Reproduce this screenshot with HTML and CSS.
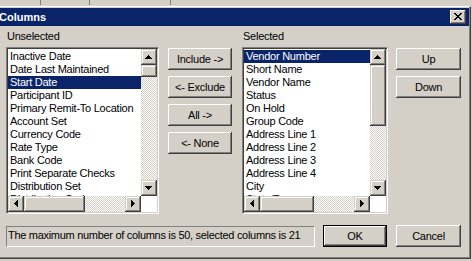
FILE: index.html
```html
<!DOCTYPE html>
<html>
<head>
<meta charset="utf-8">
<link rel="stylesheet" href="styles.css">
</head>
<body>
<div class="backdrop"></div>
<div class="dialog">
  <div class="caption">
    <span class="caption-title">Columns</span>
    <div class="caption-close">
      <svg width="16" height="14" viewBox="0 0 16 14" shape-rendering="crispEdges"><path transform="translate(4 3)" d="M0 0h2v1H0z M6 0h2v1H6z M1 1h2v1H1z M5 1h2v1H5z M2 2h4v1H2z M3 3h2v1H3z M2 4h4v1H2z M1 5h2v1H1z M5 5h2v1H5z M0 6h2v1H0z M6 6h2v1H6z" fill="#000"/></svg>
    </div>
  </div>
  <div class="dialog-body">
    <div class="lists">
      <div class="label">Unselected</div>
      <div></div>
      <div class="label">Selected</div>
      <div></div>

      <div class="listbox listbox-left">
        <div class="items">
          <div class="item">Inactive Date</div>
          <div class="item">Date Last Maintained</div>
          <div class="item selected">Start Date</div>
          <div class="item">Participant ID</div>
          <div class="item">Primary Remit-To Location</div>
          <div class="item">Account Set</div>
          <div class="item">Currency Code</div>
          <div class="item">Rate Type</div>
          <div class="item">Bank Code</div>
          <div class="item">Print Separate Checks</div>
          <div class="item">Distribution Set</div>
          <div class="item">Distribution Code</div>
        </div>
        <div class="vscroll">
          <div class="sb-btn"><svg width="16" height="16" viewBox="0 0 16 16" shape-rendering="crispEdges"><path transform="translate(4 6)" d="M3 0h1v1h1v1h1v1h1v1H0v-1h1v-1h1v-1h1z"/></svg></div>
          <div class="sb-thumb vthumb-left"></div>
          <div class="sb-track"></div>
          <div class="sb-btn"><svg width="16" height="16" viewBox="0 0 16 16" shape-rendering="crispEdges"><path transform="translate(4 6)" d="M0 0h7v1h-1v1h-1v1h-1v1h-1v-1h-1v-1h-1v-1H0z"/></svg></div>
        </div>
        <div class="hscroll">
          <div class="sb-btn"><svg width="16" height="16" viewBox="0 0 16 16" shape-rendering="crispEdges"><path transform="translate(6 4)" d="M3 0h1v7h-1v-1h-1v-1h-1v-1H0v-1h1v-1h1v-1h1z"/></svg></div>
          <div class="sb-thumb hthumb-left"></div>
          <div class="sb-track"></div>
          <div class="sb-btn"><svg width="16" height="16" viewBox="0 0 16 16" shape-rendering="crispEdges"><path transform="translate(6 4)" d="M0 0h1v1h1v1h1v1h1v1h-1v1h-1v1h-1v1H0z"/></svg></div>
        </div>
        <div class="corner"></div>
      </div>

      <div class="move-buttons">
        <div class="btn">Include -&gt;</div>
        <div class="btn">&lt;- Exclude</div>
        <div class="btn">All -&gt;</div>
        <div class="btn">&lt;- None</div>
      </div>

      <div class="listbox listbox-right">
        <div class="items">
          <div class="item selected">Vendor Number</div>
          <div class="item">Short Name</div>
          <div class="item">Vendor Name</div>
          <div class="item">Status</div>
          <div class="item">On Hold</div>
          <div class="item">Group Code</div>
          <div class="item">Address Line 1</div>
          <div class="item">Address Line 2</div>
          <div class="item">Address Line 3</div>
          <div class="item">Address Line 4</div>
          <div class="item">City</div>
          <div class="item">State/Prov.</div>
        </div>
        <div class="vscroll">
          <div class="sb-btn"><svg width="16" height="16" viewBox="0 0 16 16" shape-rendering="crispEdges"><path transform="translate(4 6)" d="M3 0h1v1h1v1h1v1h1v1H0v-1h1v-1h1v-1h1z"/></svg></div>
          <div class="sb-thumb vthumb-right"></div>
          <div class="sb-track"></div>
          <div class="sb-btn"><svg width="16" height="16" viewBox="0 0 16 16" shape-rendering="crispEdges"><path transform="translate(4 6)" d="M0 0h7v1h-1v1h-1v1h-1v1h-1v-1h-1v-1h-1v-1H0z"/></svg></div>
        </div>
        <div class="hscroll">
          <div class="sb-btn"><svg width="16" height="16" viewBox="0 0 16 16" shape-rendering="crispEdges"><path transform="translate(6 4)" d="M3 0h1v7h-1v-1h-1v-1h-1v-1H0v-1h1v-1h1v-1h1z"/></svg></div>
          <div class="sb-thumb hthumb-right"></div>
          <div class="sb-track"></div>
          <div class="sb-btn"><svg width="16" height="16" viewBox="0 0 16 16" shape-rendering="crispEdges"><path transform="translate(6 4)" d="M0 0h1v1h1v1h1v1h1v1h-1v1h-1v1h-1v1H0z"/></svg></div>
        </div>
        <div class="corner"></div>
      </div>

      <div class="order-buttons">
        <div class="btn btn-wide">Up</div>
        <div class="btn btn-wide">Down</div>
      </div>
    </div>

    <div class="footer">
      <div class="status">The maximum number of columns is 50, selected columns is 21</div>
      <div class="btn btn-default btn-ok">OK</div>
      <div class="btn btn-wide btn-cancel">Cancel</div>
    </div>
  </div>
</div>
</body>
</html>
```

FILE: styles.css
```css
* { box-sizing: border-box; }
html, body { margin: 0; padding: 0; }
body {
  width: 472px;
  height: 261px;
  overflow: hidden;
  background: #d4d0c8;
  font-family: "Liberation Sans", Arial, sans-serif;
  font-size: 11px;
  letter-spacing: -0.25px;
  color: #000;
}

.backdrop {
  height: 6px;
  background:
    linear-gradient(#808080, #808080) 40px 0 / 1px 5px no-repeat,
    linear-gradient(#808080, #808080) 89px 0 / 1px 5px no-repeat,
    linear-gradient(#808080, #808080) 170px 0 / 1px 5px no-repeat,
    #d4d0c8;
}

.dialog {
  margin-left: -4px;
  width: 475px;
  height: 253px;
  border-top: 1px solid #fff;
  border-right: 1px solid #404040;
  border-bottom: 1px solid #404040;
  padding: 1px 1px 1px 0;
  box-shadow: inset -1px -1px 0 #808080;
  background: #d4d0c8;
  display: flex;
  flex-direction: column;
}

.caption {
  height: 18px;
  flex: none;
  background: #0a246a;
  color: #fff;
  font-weight: bold;
  letter-spacing: 0;
  display: flex;
  align-items: center;
  justify-content: space-between;
  padding: 0 3px 0 3px;
}
.caption-title { line-height: 13px; }
.caption-close {
  width: 16px;
  height: 14px;
  background: #d4d0c8;
  box-shadow: inset -1px -1px 0 #404040, inset 1px 1px 0 #fff, inset -2px -2px 0 #808080;
}
.caption-close svg { display: block; }

.dialog-body { padding-left: 10px; }

.lists {
  display: grid;
  grid-template-columns: 162px 74px 154px 65px;
  grid-template-rows: 21px 167px;
}
.label { padding: 4px 0 0 1px; line-height: 13px; }

.listbox {
  height: 167px;
  border: 1px solid;
  border-color: #808080 #fff #fff #808080;
  box-shadow: inset 1px 1px 0 #404040, inset -1px -1px 0 #d4d0c8;
  padding: 1px;
  background: #fff;
  display: grid;
  grid-template-columns: 1fr 16px;
  grid-template-rows: 1fr 16px;
}
.listbox-left { width: 153px; }
.listbox-right { width: 146px; }

.items { overflow: hidden; padding-top: 1px; background: #fff; min-width: 0; min-height: 0; }
.item { height: 13px; line-height: 13px; padding-left: 2px; white-space: nowrap; }
.item.selected { background: #0a246a; color: #fff; }

.vscroll { display: flex; flex-direction: column; min-height: 0; }
.hscroll { display: flex; min-width: 0; }
.sb-btn, .sb-thumb {
  flex: none;
  background: #d4d0c8;
  box-shadow: inset -1px -1px 0 #404040, inset 1px 1px 0 #d4d0c8, inset -2px -2px 0 #808080, inset 2px 2px 0 #fff;
}
.sb-btn { width: 16px; height: 16px; }
.sb-btn svg { display: block; }
.sb-track {
  flex: 1;
  background: repeating-conic-gradient(#fff 0 25%, #d4d0c8 0 50%) 0 0 / 2px 2px;
}
.vthumb-left { height: 12px; }
.vthumb-right { height: 61px; }
.hthumb-left { width: 61px; }
.hthumb-right { width: 54px; }
.corner { background: #fff; }

.move-buttons, .order-buttons {
  display: flex;
  flex-direction: column;
  gap: 6px;
  padding-top: 1px;
}

.btn {
  width: 64px;
  height: 22px;
  flex: none;
  background: #d4d0c8;
  box-shadow: inset -1px -1px 0 #404040, inset 1px 1px 0 #fff, inset -2px -2px 0 #808080, inset 2px 2px 0 #d4d0c8;
  display: flex;
  align-items: center;
  justify-content: center;
  white-space: nowrap;
}
.btn-wide { width: 65px; }
.btn-default {
  border: 1px solid #000;
}

.footer {
  display: flex;
  align-items: flex-start;
  margin-top: 11px;
}
.status {
  width: 309px;
  height: 21px;
  margin-top: 1px;
  border: 1px solid;
  border-color: #808080 #fff #fff #808080;
  padding-left: 1px;
  line-height: 17px;
  letter-spacing: -0.3px;
  white-space: nowrap;
  overflow: hidden;
}
.btn-ok { margin-left: 8px; }
.btn-cancel { margin-left: 9px; }
```
